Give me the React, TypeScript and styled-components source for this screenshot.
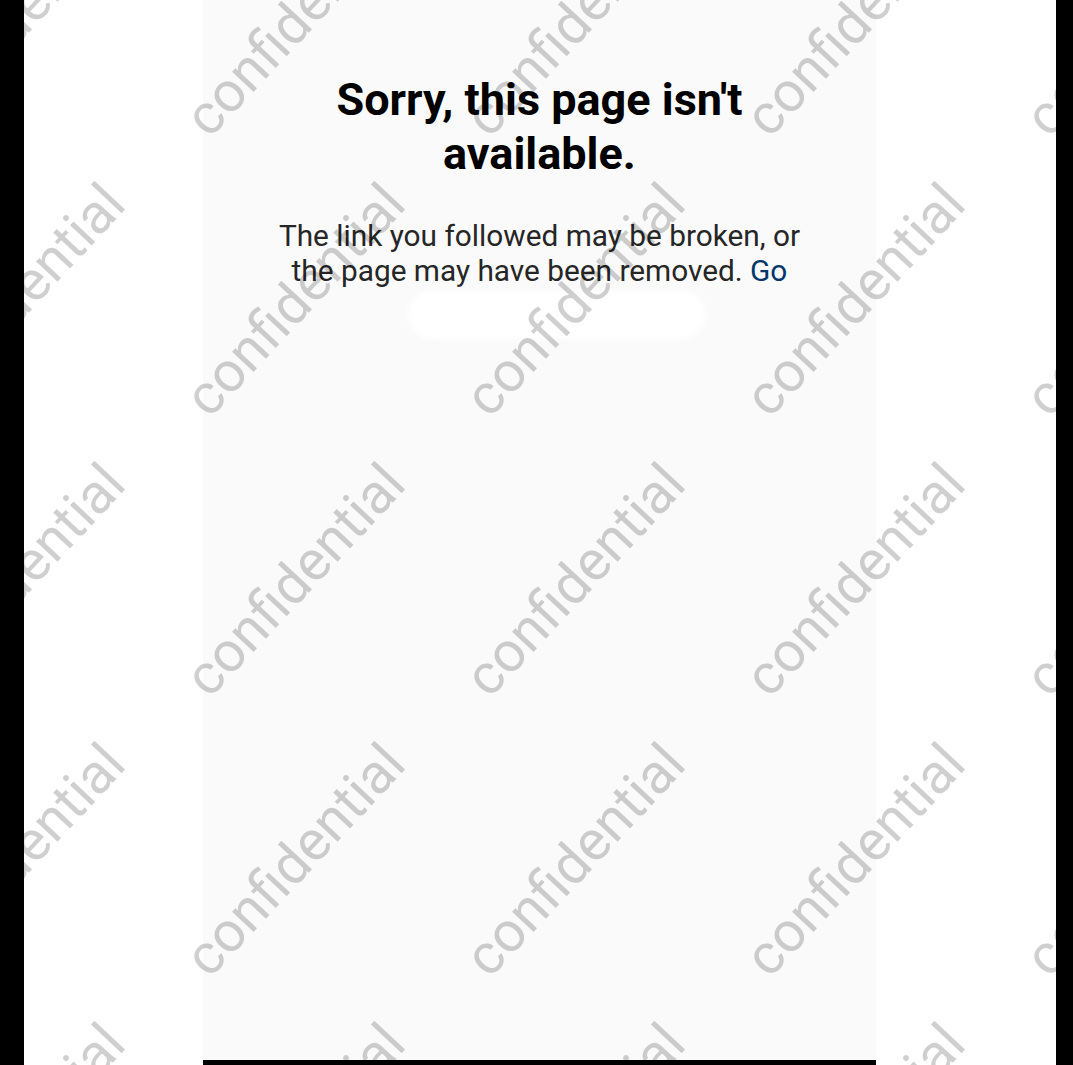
import React from 'react'
import styled, { createGlobalStyle } from 'styled-components'

const GlobalStyle = createGlobalStyle`
  html, body {
    margin: 0;
    padding: 0;
    background: #000;
  }
  body {
    font-family: Roboto, "Liberation Sans", Arial, sans-serif;
  }
`

const ROWS = 5
const COLS = 5

const App: React.FC = () => {
  const marks = Array.from({ length: ROWS * COLS })

  return (
    <>
      <GlobalStyle />
      <Frame>
        <SideBar $width={24} />
        <Screen>
          <Panel>
            <Content>
              <Title>Sorry, this page isn't available.</Title>
              <Message>
                The link you followed may be broken, or the page may have been removed. <Link>Go</Link>
              </Message>
              <Redaction />
            </Content>
            <HomeBar />
          </Panel>
          <Watermarks>
            {marks.map((_, i) => (
              <MarkCell key={i}>
                <Mark>confidential</Mark>
              </MarkCell>
            ))}
          </Watermarks>
        </Screen>
        <SideBar $width={17} />
      </Frame>
    </>
  )
}

const Frame = styled.div`
  display: flex;
  width: 1073px;
  height: 1065px;
  overflow: hidden;
`

const SideBar = styled.div<{ $width: number }>`
  flex: 0 0 ${(p) => p.$width}px;
  background: #000;
`

const Screen = styled.div`
  position: relative;
  flex: 1;
  background: #fff;
  overflow: hidden;
`

const Panel = styled.div`
  display: flex;
  flex-direction: column;
  width: 673px;
  height: 100%;
  margin-left: 179px;
  background: #fafafa;
`

const Content = styled.div`
  flex: 1;
  display: flex;
  flex-direction: column;
  align-items: center;
  padding-top: 73px;
`

const Title = styled.h1`
  margin: 0;
  width: 460px;
  font-size: 45px;
  line-height: 54px;
  font-weight: 700;
  color: #000;
  text-align: center;
`

const Message = styled.p`
  margin: 37px 0 0;
  width: 560px;
  font-size: 29.8px;
  line-height: 35px;
  color: #262626;
  text-align: center;
`

const Link = styled.span`
  color: #00376b;
`

const Redaction = styled.div`
  width: 298px;
  height: 48px;
  margin: 3px 0 0 34px;
  border-radius: 24px;
  background: #fff;
  filter: blur(3px);
`

const HomeBar = styled.div`
  height: 5px;
  background: #000;
`

const Watermarks = styled.div`
  position: absolute;
  top: -120px;
  left: -149px;
  display: grid;
  grid-template-columns: repeat(${COLS}, 280px);
  grid-auto-rows: 280px;
  pointer-events: none;
`

const MarkCell = styled.div`
  display: flex;
  align-items: center;
  justify-content: center;
`

const Mark = styled.span`
  transform: rotate(-47deg);
  font-family: Roboto, "Liberation Sans", sans-serif;
  font-size: 56px;
  color: rgba(0, 0, 0, 0.19);
  white-space: nowrap;
`

export default App
